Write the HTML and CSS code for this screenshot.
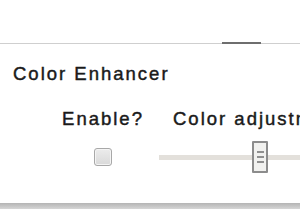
FILE: index.html
```html
<!DOCTYPE html>
<html lang="en">
<head>
    <meta charset="UTF-8">
    <title>Color Enhancer</title>
    <link rel="stylesheet" href="styles.css">
</head>
<body>
    <div class="top-area"></div>
    <div class="tab-rule"><span class="tab-mark"></span></div>

    <div class="panel">
        <div class="panel-title">Color Enhancer</div>
        <div class="row labels">
            <div class="col-enable">Enable?</div>
            <div class="col-adjust">Color adjustment</div>
        </div>
        <div class="row controls">
            <div class="col-enable">
                <input type="checkbox" class="check" id="enableBox">
            </div>
            <div class="col-adjust">
                <div class="slider">
                    <div class="slider-thumb">
                        <span></span><span></span><span></span>
                    </div>
                </div>
            </div>
        </div>
    </div>
    <div class="panel-shadow"></div>
</body>
</html>
```

FILE: styles.css
```css
body {
    margin: 0;
    background: #ffffff;
    font-family: "Liberation Sans", Arial, sans-serif;
    color: #1a1a1a;
    overflow: hidden;
    width: 300px;
}

.top-area {
    height: 43px;
}

.tab-rule {
    display: flex;
    height: 1px;
    background: #cfcfcf;
}

.tab-mark {
    width: 39px;
    height: 2px;
    margin-left: 222px;
    margin-top: -1px;
    background: #6e6e6e;
}

.panel {
    padding: 19px 0 30px 0;
    overflow: hidden;
}

.panel-title,
.labels {
    font-size: 18.5px;
    line-height: 22px;
    letter-spacing: 2px;
    -webkit-text-stroke: 0.45px #1a1a1a;
}

.panel-title {
    padding-left: 13px;
}

.row {
    display: flex;
    white-space: nowrap;
}

.labels {
    margin-top: 23px;
}

.controls {
    margin-top: 11px;
    height: 32px;
    align-items: center;
}

.col-enable {
    flex: none;
    width: 100px;
    margin-left: 53px;
    display: flex;
    justify-content: center;
    align-items: center;
}

.col-adjust {
    flex: none;
    margin-left: 6px;
}

.labels .col-adjust {
    padding-left: 14px;
}

.check {
    appearance: none;
    -webkit-appearance: none;
    margin: 0;
    width: 18px;
    height: 18px;
    border: 1px solid #a8a8a8;
    border-radius: 3px;
    background: linear-gradient(#ececec, #d9d9d9);
    box-shadow: inset 0 0 0 1px #f4f4f4;
}

.slider {
    width: 200px;
    height: 32px;
    display: flex;
    align-items: center;
    background: linear-gradient(transparent 14px, #e3e0db 14px, #e3e0db 19px, transparent 19px);
}

.slider-thumb {
    margin-left: 93px;
    width: 12px;
    height: 28px;
    border: 2px solid #8c8c8c;
    border-radius: 1px;
    background: #f1f1ef;
    display: flex;
    flex-direction: column;
    justify-content: center;
    align-items: center;
    gap: 3px;
}

.slider-thumb span {
    width: 7px;
    height: 2px;
    background: #8f8f8f;
}

.panel-shadow {
    height: 6px;
    background: linear-gradient(#b4b4b4, #d6d6d6);
}
```
